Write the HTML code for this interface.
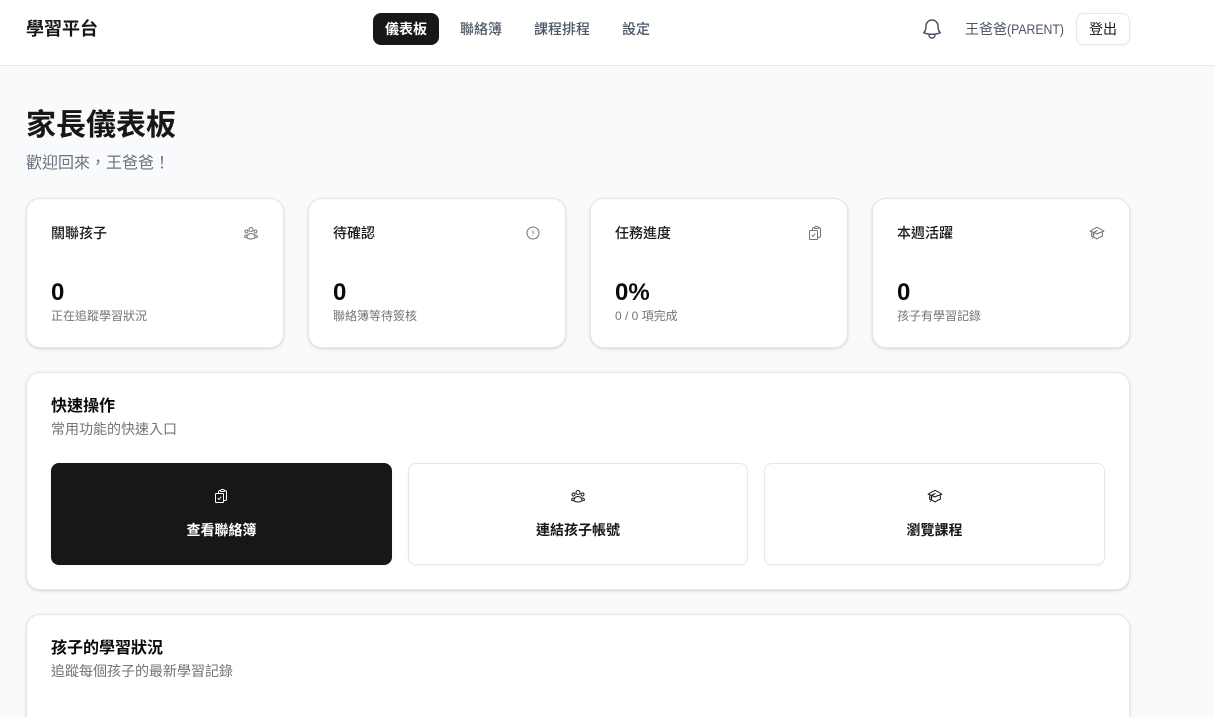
<!DOCTYPE html>
<html lang="zh-Hant">
<head>
<meta charset="utf-8">
<title>學習平台</title>
<style>
*{box-sizing:border-box;margin:0;padding:0}
html,body{width:1214px;height:717px;overflow:hidden;background:#f9fafb}
body{position:relative;font-family:"Liberation Sans","Noto Sans CJK TC",sans-serif;color:#171717}
.t{position:absolute;white-space:nowrap;line-height:20px}
.hdr{position:absolute;left:0;top:0;width:1214px;height:66px;background:#fff;border-bottom:1px solid #e5e7eb}
.pill{position:absolute;left:373px;top:13px;width:66px;height:32px;background:#171717;border-radius:8px}
.nav{font-size:14px;font-weight:500;color:#4b5563;top:19px}
.btn{position:absolute;left:1076px;top:13px;width:54px;height:32px;background:#fff;border:1px solid #e5e7eb;border-radius:8px;box-shadow:0 1px 2px rgba(0,0,0,.05);font-size:14px;font-weight:400;line-height:30px;text-align:center}
.card{position:absolute;background:#fff;border:1px solid #e5e7eb;border-radius:14px;box-shadow:0 1px 3px rgba(0,0,0,.1),0 1px 2px rgba(0,0,0,.06)}
.ct{font-size:14px;font-weight:500;color:#171717;top:223px}
.num{font-size:24px;font-weight:700;line-height:32px;color:#0a0a0a;top:277px}
.desc{font-size:12px;line-height:16px;color:#737373;top:308px}
.act{position:absolute;top:463px;height:102px;border-radius:8px;background:#fff;border:1px solid #e5e7eb;box-shadow:0 1px 2px rgba(0,0,0,.05)}
.al{font-size:14px;font-weight:700;top:520px;text-align:center;color:#171717}
svg{position:absolute;fill:none;stroke-linecap:round;stroke-linejoin:round}
.ic{width:16px;height:16px;stroke:#737373;stroke-width:1.5;top:225px}
.ia{width:16px;height:16px;stroke:#171717;stroke-width:1.5;top:488px}
.sx{display:inline-block;transform:scaleX(.875);transform-origin:left center}
</style>
</head>
<body>
<svg width="0" height="0" style="position:absolute">
<defs>
<symbol id="users" viewBox="0 0 24 24"><path d="M18 18.72a9.094 9.094 0 0 0 3.741-.479 3 3 0 0 0-4.682-2.72m.94 3.198.001.031c0 .225-.012.447-.037.666A11.944 11.944 0 0 1 12 21c-2.17 0-4.207-.576-5.963-1.584A6.062 6.062 0 0 1 6 18.719m12 0a5.971 5.971 0 0 0-.941-3.197m0 0A5.995 5.995 0 0 0 12 12.75a5.995 5.995 0 0 0-5.058 2.772m0 0a3 3 0 0 0-4.681 2.72 8.986 8.986 0 0 0 3.74.477m.94-3.197a5.971 5.971 0 0 0-.94 3.197M15 6.75a3 3 0 1 1-6 0 3 3 0 0 1 6 0Zm6 3a2.25 2.25 0 1 1-4.5 0 2.25 2.25 0 0 1 4.5 0Zm-13.5 0a2.25 2.25 0 1 1-4.5 0 2.25 2.25 0 0 1 4.5 0Z"/></symbol>
<symbol id="alert" viewBox="0 0 24 24"><path d="M12 9v3.75m9-.75a9 9 0 1 1-18 0 9 9 0 0 1 18 0Zm-9 3.75h.008v.008H12v-.008Z"/></symbol>
<symbol id="clip" viewBox="0 0 24 24"><path d="M11.35 3.836c-.065.21-.1.433-.1.664 0 .414.336.75.75.75h4.5a.75.75 0 0 0 .75-.75 2.25 2.25 0 0 0-.1-.664m-5.8 0A2.251 2.251 0 0 1 13.5 2.25H15c1.012 0 1.867.668 2.15 1.586m-5.8 0c-.376.023-.75.05-1.124.08C9.095 4.01 8.25 4.973 8.25 6.108V8.25m8.9-4.414c.376.023.75.05 1.124.08 1.131.094 1.976 1.057 1.976 2.192V16.5A2.25 2.25 0 0 1 18 18.75h-2.25m-7.5-10.5H4.875c-.621 0-1.125.504-1.125 1.125v11.25c0 .621.504 1.125 1.125 1.125h9.75c.621 0 1.125-.504 1.125-1.125V18.75m-7.5-10.5h6.375c.621 0 1.125.504 1.125 1.125v9.375m-8.25-3 1.5 1.5 3-3.75"/></symbol>
<symbol id="cap" viewBox="0 0 24 24"><path d="M4.26 10.147a60.438 60.438 0 0 0-.491 6.347A48.62 48.62 0 0 1 12 20.904a48.62 48.62 0 0 1 8.232-4.41 60.46 60.46 0 0 0-.491-6.347m-15.482 0a50.636 50.636 0 0 0-2.658-.813A59.906 59.906 0 0 1 12 3.493a59.903 59.903 0 0 1 10.399 5.84c-.896.248-1.783.52-2.658.814m-15.482 0A50.717 50.717 0 0 1 12 13.489a50.702 50.702 0 0 1 7.74-3.342M6.75 15a.75.75 0 1 0 0-1.5.75.75 0 0 0 0 1.5Zm0 0v-3.675A55.378 55.378 0 0 1 12 8.443m-7.007 11.55A5.981 5.981 0 0 0 6.75 15.75v-1.5"/></symbol>
</defs>
</svg>

<div class="hdr"></div>
<div class="t" style="left:26px;top:17px;font-size:18px;line-height:24px;font-weight:700;color:#171717">學習平台</div>
<div class="pill"></div>
<div class="t nav" style="left:385px;color:#fff;font-weight:700">儀表板</div>
<div class="t nav" style="left:460px">聯絡簿</div>
<div class="t nav" style="left:534px">課程排程</div>
<div class="t nav" style="left:622px">設定</div>
<svg style="left:920px;top:17px;width:24px;height:24px;stroke:#4b5563;stroke-width:1.5" viewBox="0 0 24 24"><path d="M14.857 17.082a23.848 23.848 0 0 0 5.454-1.31A8.967 8.967 0 0 1 18 9.75V9A6 6 0 0 0 6 9v.75a8.967 8.967 0 0 1-2.312 6.022c1.733.64 3.56 1.085 5.455 1.31m5.714 0a24.255 24.255 0 0 1-5.714 0m5.714 0a3 3 0 1 1-5.714 0"/></svg>
<div class="t" style="left:965px;top:19px;font-size:14px;color:#4b5563">王爸爸<span class="sx">(PARENT)</span></div>
<div class="btn">登出</div>

<div class="t" style="left:26px;top:106px;font-size:30px;line-height:40px;font-weight:700;color:#171717">家長儀表板</div>
<div class="t" style="left:26px;top:152px;font-size:16px;line-height:24px;color:#6b7280">歡迎回來，王爸爸！</div>

<div class="card" style="left:26px;top:198px;width:258px;height:150px"></div>
<div class="t ct" style="left:51px">關聯孩子</div>
<svg class="ic" style="left:243px"><use href="#users"/></svg>
<div class="t num" style="left:51px">0</div>
<div class="t desc" style="left:51px">正在追蹤學習狀況</div>

<div class="card" style="left:308px;top:198px;width:258px;height:150px"></div>
<div class="t ct" style="left:333px">待確認</div>
<svg class="ic" style="left:525px"><use href="#alert"/></svg>
<div class="t num" style="left:333px">0</div>
<div class="t desc" style="left:333px">聯絡簿等待簽核</div>

<div class="card" style="left:590px;top:198px;width:258px;height:150px"></div>
<div class="t ct" style="left:615px">任務進度</div>
<svg class="ic" style="left:807px"><use href="#clip"/></svg>
<div class="t num" style="left:615px">0%</div>
<div class="t desc" style="left:615px">0 / 0 項完成</div>

<div class="card" style="left:872px;top:198px;width:258px;height:150px"></div>
<div class="t ct" style="left:897px">本週活躍</div>
<svg class="ic" style="left:1089px"><use href="#cap"/></svg>
<div class="t num" style="left:897px">0</div>
<div class="t desc" style="left:897px">孩子有學習記錄</div>

<div class="card" style="left:26px;top:372px;width:1104px;height:218px"></div>
<div class="t" style="left:51px;top:395px;font-size:16px;line-height:24px;font-weight:700;color:#0a0a0a">快速操作</div>
<div class="t" style="left:51px;top:419px;font-size:14px;color:#737373">常用功能的快速入口</div>

<div class="act" style="left:51px;width:341px;background:#171717;border-color:#171717"></div>
<svg class="ia" style="left:213px;stroke:#fff"><use href="#clip"/></svg>
<div class="t al" style="left:51px;width:341px;color:#fff">查看聯絡簿</div>

<div class="act" style="left:408px;width:340px"></div>
<svg class="ia" style="left:570px"><use href="#users"/></svg>
<div class="t al" style="left:408px;width:340px">連結孩子帳號</div>

<div class="act" style="left:764px;width:341px"></div>
<svg class="ia" style="left:927px"><use href="#cap"/></svg>
<div class="t al" style="left:764px;width:341px">瀏覽課程</div>

<div class="card" style="left:26px;top:614px;width:1104px;height:103px;border-bottom:0;border-radius:14px 14px 0 0"></div>
<div class="t" style="left:51px;top:637px;font-size:16px;line-height:24px;font-weight:700;color:#0a0a0a">孩子的學習狀況</div>
<div class="t" style="left:51px;top:661px;font-size:14px;color:#737373">追蹤每個孩子的最新學習記錄</div>
</body>
</html>
